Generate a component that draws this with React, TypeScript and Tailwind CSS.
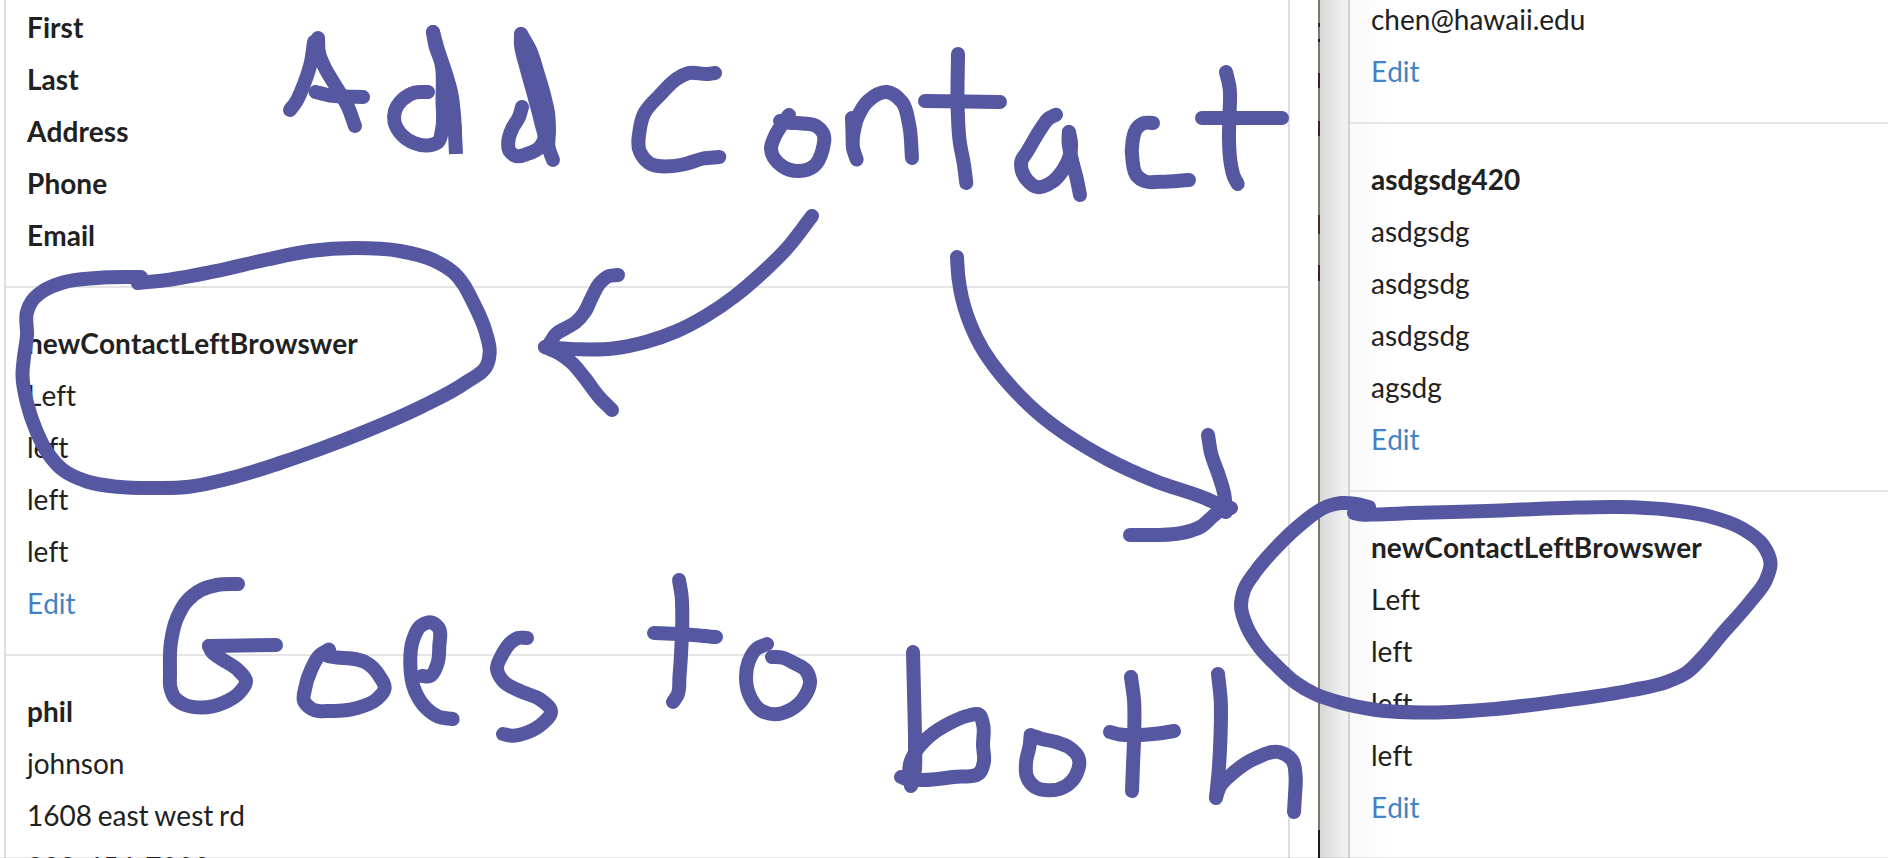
type Point = [number, number];

const LINK = "Edit";

// Turns a list of pen positions into a smooth cubic path.
function smooth(points: Point[]): string {
  const n = points.length;
  const tangents = points.map((_, i): Point => {
    const a = points[Math.max(0, i - 1)];
    const p = points[i];
    const b = points[Math.min(n - 1, i + 1)];
    const inLen = Math.hypot(p[0] - a[0], p[1] - a[1]) || 1;
    const outLen = Math.hypot(b[0] - p[0], b[1] - p[1]) || 1;
    // The nearer neighbour weighs more, so uneven spacing keeps the curve round.
    const dx = ((p[0] - a[0]) / inLen) * outLen + ((b[0] - p[0]) / outLen) * inLen;
    const dy = ((p[1] - a[1]) / inLen) * outLen + ((b[1] - p[1]) / outLen) * inLen;
    const len = Math.hypot(dx, dy) || 1;
    return [dx / len, dy / len];
  });
  let d = `M${points[0][0]} ${points[0][1]}`;
  for (let i = 0; i < n - 1; i++) {
    const p = points[i];
    const q = points[i + 1];
    const k = Math.hypot(q[0] - p[0], q[1] - p[1]) / 3;
    const c1 = [p[0] + tangents[i][0] * k, p[1] + tangents[i][1] * k];
    const c2 = [q[0] - tangents[i + 1][0] * k, q[1] - tangents[i + 1][1] * k];
    d += `C${c1[0].toFixed(1)} ${c1[1].toFixed(1)} ${c2[0].toFixed(1)} ${c2[1].toFixed(1)} ${q[0]} ${q[1]}`;
  }
  return d;
}

const strokes: Point[][] = [
  // upper note, first word
  [[290, 110], [296, 102], [304, 84], [311, 62], [314, 42]],
  [[318, 38], [319, 53], [325, 68], [335, 85], [348, 107], [355, 126]],
  [[315.5, 92], [330, 95.5], [345, 96.5], [363, 97]],
  [[428, 92], [415, 92.5], [402, 100], [395, 111], [394.5, 122], [402, 135], [414, 143], [427, 145.5], [438, 142], [442, 130], [442.5, 100], [441.5, 64], [435, 44], [433, 32]],
  [[433, 32], [438, 50], [446, 74], [451, 92], [454, 115], [455, 132]],
  [[522, 107], [519, 117], [512, 129], [508.5, 140], [509.5, 151], [516, 156], [527, 154], [539, 148], [544, 140], [541, 122], [534, 95], [526, 66], [521, 45], [521, 34]],
  [[521, 34], [530, 50], [538.5, 76], [544, 95], [548, 113], [549, 130], [548.7, 148], [553, 160]],
  // upper note, second word
  [[715, 73], [708, 74], [688, 73.3], [678, 78], [660, 95], [644, 114], [639.7, 130], [640, 152], [649, 163], [670, 166.3], [685, 164], [703, 158.5], [719.3, 157]],
  [[780, 121], [790, 122.8], [803, 123.5], [817, 126.5], [823, 133], [822.5, 150], [814, 166], [799, 171], [782, 166], [771, 149], [775, 136], [783, 123], [789, 115]],
  [[852, 118], [852.7, 137], [853, 148], [856.7, 159.5]],
  [[852.7, 137], [857, 119], [868, 101], [887, 92], [902, 102], [909, 124], [912, 158]],
  [[958, 54], [957.7, 110], [959.5, 140], [964, 165], [966.3, 183]],
  [[925, 101], [1000, 102]],
  [[1056, 114.7], [1048, 119], [1042, 127], [1027, 152], [1021.5, 161], [1022, 171], [1027, 180], [1037, 187], [1052, 182], [1063, 170], [1070, 155], [1071, 143], [1069, 132]],
  [[1069, 132], [1068.5, 141], [1071.5, 158], [1077, 180], [1080, 195]],
  [[1153, 123], [1144, 123], [1137, 128], [1132.5, 142], [1132.5, 160], [1137, 176], [1144, 181], [1160, 181.8], [1189, 180]],
  [[1226, 72], [1229.5, 87], [1229.5, 115], [1229, 140], [1231, 165], [1234, 177], [1237.7, 184]],
  [[1202, 118], [1282, 118]],
  // arrow to the left window
  [[812, 216], [789, 246], [762, 273], [735, 296], [706.5, 315.5], [677, 331], [645.6, 342], [613, 348.5], [580, 349.3], [545, 347]],
  [[618, 275], [609, 276], [600, 283], [592, 297], [584, 313], [576, 322], [566, 328], [556, 334], [550, 343]],
  [[545, 347], [560, 354], [571, 362], [584, 377], [600, 398], [612, 410]],
  // arrow to the right window
  [[957, 257], [958.5, 278], [962, 298], [976, 337], [1029, 405], [1108, 459.5], [1155, 481], [1208, 499.5], [1220, 505], [1231, 508]],
  [[1208, 435], [1211, 453], [1219, 476], [1224, 493], [1226, 512]],
  [[1130, 535], [1153, 535], [1175, 534], [1190, 531], [1202, 526], [1212, 517], [1223, 508]],
  // ring round the left entry
  [[137.7, 283], [167, 280], [213, 271.7], [267, 259.5], [310, 251], [355, 248], [400, 251], [433, 260], [453, 272], [475, 306], [486, 333], [489.7, 352], [487, 365], [465, 383], [423, 406], [364, 432], [320, 449], [280, 463], [233, 477.5], [187, 487], [160, 488], [117, 486.7], [87, 481.5], [63, 470], [47, 452], [36, 430], [27, 403], [22.5, 375], [24, 357], [27, 335], [27, 312], [32, 301], [43, 291], [63, 282.5], [97, 278], [141, 277]],
  // ring round the right entry
  [[1354, 513], [1362, 514.5], [1375, 514.5], [1412, 513], [1487, 511], [1562, 508], [1619, 507], [1667, 509.5], [1708, 516], [1742, 528.5], [1763, 545], [1770.5, 563], [1766, 580], [1750, 602], [1722, 634], [1701, 659], [1686, 673], [1668, 681.5], [1630, 690.5], [1562, 701], [1495, 709], [1431, 712.5], [1375, 709.7], [1338, 702], [1315, 694], [1296, 683], [1278, 667], [1260, 648], [1247, 627], [1241, 606], [1244, 590], [1256, 571], [1273, 551], [1300, 525], [1328, 506], [1341, 503], [1356, 504], [1369, 507]],
  // lower note, first word
  [[238, 584], [217, 585], [201, 590], [187, 601], [177, 618], [171, 642], [170, 673], [170.5, 688], [174, 697], [184, 704.5], [202, 707.5], [223, 703], [240, 692], [246, 681], [239, 671], [220, 658], [212, 652], [209, 646]],
  [[209, 646], [276, 645]],
  [[329, 649.5], [320, 655], [311, 670], [305, 689], [304, 701], [311, 708.5], [332, 711], [357, 708], [377, 699], [384.7, 688], [380, 677], [365, 662], [351, 658.5], [337, 657.5], [328, 656]],
  [[422, 676], [430, 676], [437, 665], [439.3, 646], [438, 627], [431, 622.3], [422, 625], [413, 640], [410.3, 663], [415, 691], [426, 708], [438, 716.5], [452.7, 719]],
  [[527, 638], [518, 638], [512, 641.5], [502, 655], [497, 669], [503, 681], [520, 691], [541, 700], [551, 712], [543, 723], [527, 732.5], [512, 735.7], [503, 734]],
  // lower note, second word
  [[679, 580], [681.5, 595], [682.3, 617], [681.7, 640], [679.5, 676], [677.5, 695], [673, 702]],
  [[654, 633], [680, 634], [716, 637]],
  [[767, 644], [757, 648.5], [748.5, 662], [746, 678], [750, 696.5], [761, 710.5], [775, 714.3], [790, 710], [805, 696], [810, 681], [806, 670.5], [793, 662.5], [783, 657.7], [772, 657]],
  // lower note, third word
  [[913, 652], [914, 693], [915, 746], [914.5, 773], [911, 786]],
  [[909, 775], [910, 764], [916, 751], [928, 737.5], [950, 723], [969, 715.5], [979, 714.5], [983, 724], [983, 745], [983.7, 763], [981, 771], [953, 777], [920, 780], [908, 779.5], [901, 777]],
  [[1030.7, 735], [1029.7, 745], [1026, 763], [1027, 777], [1035, 787], [1048, 790.3], [1065, 786.5], [1076, 775], [1078, 756.5], [1070, 748], [1056, 742], [1042, 739], [1030.7, 735]],
  [[1131, 677], [1134, 700], [1134.3, 730], [1133, 765], [1132, 791]],
  [[1110, 732], [1120, 734.5], [1140, 735], [1158, 733.5], [1174, 731]],
  [[1218, 674], [1220.7, 700], [1220.5, 737], [1218.5, 773], [1216, 798]],
  [[1216, 797], [1220, 786.5], [1233, 773], [1256, 758], [1280, 752.3], [1292, 760], [1295.7, 777], [1295, 795], [1294, 812]],
];

function Annotations() {
  return (
    <svg
      className="pointer-events-none absolute inset-0 h-[858px] w-[1888px]"
      viewBox="0 0 1888 858"
      fill="none"
      stroke="#5557a1"
      strokeWidth={14}
      strokeLinecap="round"
      strokeLinejoin="round"
      aria-hidden="true"
    >
      {strokes.map((points, i) => (
        <path key={i} d={smooth(points)} />
      ))}
      <path d="M454.6 125L456 154" strokeLinecap="butt" />
    </svg>
  );
}

function Line({ text, bold = false }: { text: string; bold?: boolean }) {
  if (text === LINK) {
    return (
      <a href="#" className="block h-[52px] text-[#4183c4]">
        {text}
      </a>
    );
  }
  return (
    <div className={bold ? "h-[52px] font-bold tracking-[0.05px]" : "h-[52px]"}>{text}</div>
  );
}

function Entry({ lines }: { lines: string[] }) {
  return (
    <div className="border-t-2 border-[#e5e5e5] px-[21px] pt-[29px] pb-[25px]">
      {lines.map((text, i) => (
        <Line key={i} text={text} bold={i === 0} />
      ))}
    </div>
  );
}

const barMarks = [
  "h-[23px] bg-[#7b7869]",
  "h-[4px] bg-[#3a2522]",
  "h-[12px] bg-[#7b7869]",
  "h-[3px] bg-[#2a1a1a]",
  "h-[31px] bg-[#7b7869]",
  "h-[15px] bg-[#3a2226]",
  "h-[33px] bg-[#7b7869]",
  "h-[15px] bg-[#3a2226]",
  "h-[79px] bg-[#7b7869]",
  "h-[19px] bg-[#4a2c20]",
  "h-[31px] bg-[#7b7869]",
  "h-[16px] bg-[#3a2226]",
  "h-[549px] bg-[#7b7869]",
  "h-[28px] bg-[#1b1b1d]",
];

export default function App() {
  return (
    <div className="relative flex h-[858px] w-[1888px] overflow-hidden bg-white font-['Lato',sans-serif] text-[28px] leading-[52px] text-[#212121] [font-kerning:none] [font-variant-ligatures:none] [word-spacing:-1.4px]">
      <section className="flex w-[1318px] shrink-0 pl-1">
        <div className="h-[858px] w-[1286px] overflow-hidden border-x-2 border-[#dededf]">
          <div className="px-[21px] pt-px pb-[25px]">
            {["First", "Last", "Address", "Phone", "Email"].map((t) => (
              <Line key={t} text={t} bold />
            ))}
          </div>
          <Entry lines={["newContactLeftBrowswer", "Left", "left", "left", "left", "Edit"]} />
          <Entry lines={["phil", "johnson", "1608 east west rd", "808-454-7000"]} />
        </div>
      </section>

      <div className="flex w-[2px] shrink-0 flex-col">
        {barMarks.map((c, i) => (
          <div key={i} className={c} />
        ))}
      </div>

      <section className="flex flex-1">
        <div className="w-[28px] shrink-0 bg-linear-to-r from-[#d9d9d9] to-[#f3f3f3]" />
        <div className="h-[858px] flex-1 overflow-hidden border-l-2 border-[#d2d2d2] bg-linear-to-r from-[#f9f9f9] to-white to-[40px]">
          <div className="-mt-[7px] px-[21px] pb-[25px]">
            <Line text="chen@hawaii.edu" />
            <Line text="Edit" />
          </div>
          <Entry lines={["asdgsdg420", "asdgsdg", "asdgsdg", "asdgsdg", "agsdg", "Edit"]} />
          <Entry lines={["newContactLeftBrowswer", "Left", "left", "left", "left", "Edit"]} />
        </div>
      </section>

      <div className="absolute inset-x-0 bottom-0 h-px bg-[#1b1c1d]/10" />
      <Annotations />
    </div>
  );
}
